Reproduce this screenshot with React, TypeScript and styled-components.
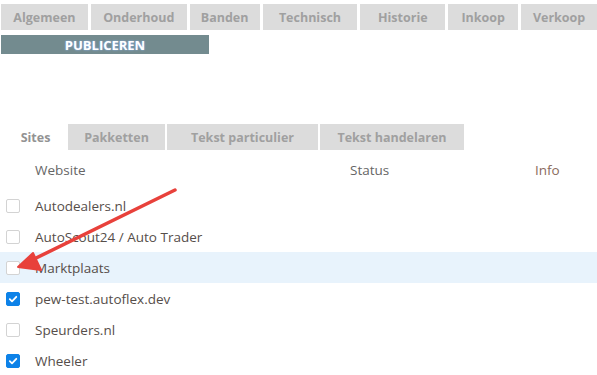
import styled, { createGlobalStyle } from "styled-components";

const GlobalStyle = createGlobalStyle`
  * { box-sizing: border-box; }
  body {
    margin: 0;
    background: #fff;
    font-family: "Open Sans", "Noto Sans", sans-serif;
  }
`;

const mainTabs = [
  { label: "Algemeen", width: 87 },
  { label: "Onderhoud", width: 96 },
  { label: "Banden", width: 70 },
  { label: "Technisch", width: 95 },
  { label: "Historie", width: 85 },
  { label: "Inkoop", width: 70 },
  { label: "Verkoop", width: 76 },
];

const subTabs = [
  { label: "Sites", width: 63, active: true },
  { label: "Pakketten", width: 97, active: false },
  { label: "Tekst particulier", width: 151, active: false },
  { label: "Tekst handelaren", width: 144, active: false },
];

const sites = [
  { name: "Autodealers.nl", checked: false },
  { name: "AutoScout24 / Auto Trader", checked: false },
  { name: "Marktplaats", checked: false, hover: true },
  { name: "pew-test.autoflex.dev", checked: true },
  { name: "Speurders.nl", checked: false },
  { name: "Wheeler", checked: true },
];

function App() {
  return (
    <Page>
      <GlobalStyle />
      <TopNav>
        {mainTabs.map((t) => (
          <MainTab key={t.label} $w={t.width}>
            {t.label}
          </MainTab>
        ))}
      </TopNav>
      <PublishBtn>PUBLICEREN</PublishBtn>

      <SubNav>
        {subTabs.map((t) => (
          <SubTab key={t.label} $w={t.width} $active={t.active}>
            {t.label}
          </SubTab>
        ))}
      </SubNav>

      <Table>
        <HeadRow>
          <span />
          <HeadCell>Website</HeadCell>
          <HeadCell>Status</HeadCell>
          <HeadCell $info>Info</HeadCell>
        </HeadRow>
        {sites.map((s) => (
          <Row key={s.name} $hover={!!s.hover}>
            <Check $checked={s.checked}>
              {s.checked && (
                <svg width="10" height="10" viewBox="0 0 10 10">
                  <path d="M1.8 5.2 L4 7.3 L8.3 2.8" fill="none" stroke="#fff" strokeWidth="1.8" strokeLinecap="round" strokeLinejoin="round" />
                </svg>
              )}
            </Check>
            <SiteName>{s.name}</SiteName>
            <span />
            <span />
          </Row>
        ))}
      </Table>

      {/* annotation arrow drawn over the list */}
      <Arrow width="597" height="375" viewBox="0 0 597 375">
        <line x1="175" y1="190" x2="30" y2="261" stroke="#e8413b" strokeWidth="3.5" strokeLinecap="round" />
        <polygon points="18,267 33,253 41,270" fill="#e8413b" stroke="#e8413b" strokeWidth="2" strokeLinejoin="round" />
      </Arrow>
    </Page>
  );
}

const Page = styled.div`
  position: relative;
  width: 597px;
  height: 375px;
  overflow: hidden;
`;

const TopNav = styled.div`
  display: flex;
  gap: 3px;
  padding: 4px 0 0 1px;
`;

const MainTab = styled.div<{ $w: number }>`
  width: ${(p) => p.$w}px;
  height: 26px;
  background: #dcdcdc;
  color: #a0a0a0;
  font-weight: 700;
  font-size: 12.5px;
  display: flex;
  align-items: center;
  justify-content: center;
`;

const PublishBtn = styled.div`
  margin: 5px 0 0 1px;
  width: 208px;
  height: 19px;
  background: #738b8f;
  color: #fff;
  font-weight: 700;
  font-size: 13px;
  display: flex;
  align-items: center;
  justify-content: center;
  text-shadow: 0 0 2px #8fb8ff;
`;

const SubNav = styled.div`
  display: flex;
  gap: 2px;
  margin-top: 70px;
  padding-left: 4px;
`;

const SubTab = styled.div<{ $w: number; $active: boolean }>`
  width: ${(p) => p.$w}px;
  height: 26px;
  background: ${(p) => (p.$active ? "transparent" : "#dcdcdc")};
  color: ${(p) => (p.$active ? "#939393" : "#a0a0a0")};
  font-weight: 700;
  font-size: 12.5px;
  display: flex;
  align-items: center;
  justify-content: center;
  margin-right: ${(p) => (p.$active ? "-1px" : "0")};
`;

const Table = styled.div`
  display: flex;
  flex-direction: column;
`;

const HeadRow = styled.div`
  display: grid;
  grid-template-columns: 35px 315px 185px 1fr;
  height: 40px;
  align-items: center;
`;

const HeadCell = styled.div<{ $info?: boolean }>`
  font-size: 13.5px;
  color: ${(p) => (p.$info ? "#8a6a5c" : "#666")};
`;

const Row = styled.div<{ $hover: boolean }>`
  display: grid;
  grid-template-columns: 35px 315px 185px 1fr;
  height: 31px;
  align-items: center;
  background: ${(p) => (p.$hover ? "#e8f3fc" : "transparent")};
`;

const Check = styled.div<{ $checked: boolean }>`
  margin-left: 6px;
  width: 14px;
  height: 14px;
  border-radius: 2px;
  border: 1px solid ${(p) => (p.$checked ? "#0d82e8" : "#d3d3d3")};
  background: ${(p) => (p.$checked ? "#0d82e8" : "#fff")};
  display: flex;
  align-items: center;
  justify-content: center;
`;

const SiteName = styled.div`
  font-size: 13.5px;
  color: #564e4a;
  white-space: nowrap;
`;

const Arrow = styled.svg`
  position: absolute;
  left: 0;
  top: 0;
  pointer-events: none;
`;

export default App;
